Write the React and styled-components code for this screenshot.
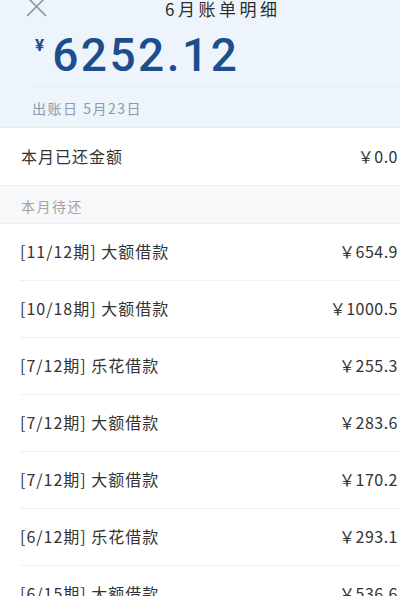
import React from 'react';
import styled, { createGlobalStyle } from 'styled-components';

const GlobalStyle = createGlobalStyle`
  html, body {
    margin: 0;
    padding: 0;
    background: #ffffff;
    overflow: hidden;
  }
  body {
    font-family: "Noto Sans CJK SC", "Noto Sans", sans-serif;
    -webkit-font-smoothing: antialiased;
  }
`;

const Page = styled.div`
  width: 400px;
  height: 596px;
  overflow: hidden;
  background: #fff;
`;

const Header = styled.header`
  background: #eef4fb;
  height: 127px;
  display: flex;
  flex-direction: column;
  border-bottom: 1px solid #e6edf5;
`;

const TopBar = styled.div`
  display: flex;
  align-items: center;
  height: 18px;
  padding-left: 26px;
`;

const CloseIcon = styled.svg`
  width: 21px;
  height: 21px;
  margin-top: -6px;
  flex-shrink: 0;
`;

const Title = styled.h1`
  margin: 0 0 0 118px;
  font-size: 17px;
  font-weight: 400;
  letter-spacing: 3.5px;
  color: #2d2d2d;
  line-height: 18px;
`;

const AmountRow = styled.div`
  display: flex;
  align-items: flex-start;
  padding-left: 35px;
  margin-top: 14px;
  height: 50px;
`;

const Yen = styled.span`
  font-family: Roboto, "Noto Sans", sans-serif;
  font-size: 17px;
  font-weight: 700;
  color: #1c4e8e;
  margin-top: 3px;
  margin-right: 8px;
`;

const BigAmount = styled.span`
  font-family: Roboto, "Noto Sans", sans-serif;
  font-size: 46px;
  font-weight: 500;
  letter-spacing: 2.5px;
  line-height: 46px;
  color: #1c4e8e;
`;

const HeaderDivider = styled.div`
  margin-left: 32px;
  height: 1px;
  background: #e3eaf2;
  margin-top: 4px;
`;

const BillDate = styled.div`
  padding-left: 32px;
  margin-top: 11px;
  font-size: 14px;
  letter-spacing: 1.5px;
  color: #8d9aab;
`;

const Row = styled.div`
  display: flex;
  align-items: center;
  justify-content: space-between;
  height: ${p => p.$h || 56}px;
  margin-left: ${p => p.$inset || 0}px;
  padding-left: ${p => p.$pad || 0}px;
  padding-right: 2px;
  border-bottom: 1px solid #f0f0f0;
`;

const Label = styled.span`
  font-size: 16px;
  letter-spacing: 1px;
  color: #333333;
  margin-top: -2px;
`;

const Money = styled.span`
  font-size: 16px;
  letter-spacing: 0.5px;
  color: #333333;
  margin-top: -2px;
`;

const SectionHead = styled.div`
  height: 38px;
  display: flex;
  align-items: center;
  padding-left: 21px;
  padding-top: 2px;
  box-sizing: border-box;
  background: #f7f8f9;
  border-bottom: 1px solid #eeeeee;
  font-size: 14px;
  letter-spacing: 1.5px;
  color: #a3a3a3;
`;

const items = [
  { label: '[11/12期] 大额借款', amount: '￥654.9' },
  { label: '[10/18期] 大额借款', amount: '￥1000.5' },
  { label: '[7/12期] 乐花借款', amount: '￥255.3' },
  { label: '[7/12期] 大额借款', amount: '￥283.6' },
  { label: '[7/12期] 大额借款', amount: '￥170.2' },
  { label: '[6/12期] 乐花借款', amount: '￥293.1' },
  { label: '[6/15期] 大额借款', amount: '￥536.6' },
];

const App = () => (
  <Page>
    <GlobalStyle />
    <Header>
      <TopBar>
        <CloseIcon viewBox="0 0 21 21" fill="none" stroke="#8a8f96" strokeWidth="1.5">
          <path d="M1 1 L20 20 M20 1 L1 20" />
        </CloseIcon>
        <Title>6月账单明细</Title>
      </TopBar>
      <AmountRow>
        <Yen>¥</Yen>
        <BigAmount>6252.12</BigAmount>
      </AmountRow>
      <HeaderDivider />
      <BillDate>出账日 5月23日</BillDate>
    </Header>
    <Row $h={57} $pad={21}>
      <Label>本月已还金额</Label>
      <Money>￥0.0</Money>
    </Row>
    <SectionHead>本月待还</SectionHead>
    {items.map((item, i) => (
      <Row key={i} $inset={20}>
        <Label>{item.label}</Label>
        <Money>{item.amount}</Money>
      </Row>
    ))}
  </Page>
);

export default App;
